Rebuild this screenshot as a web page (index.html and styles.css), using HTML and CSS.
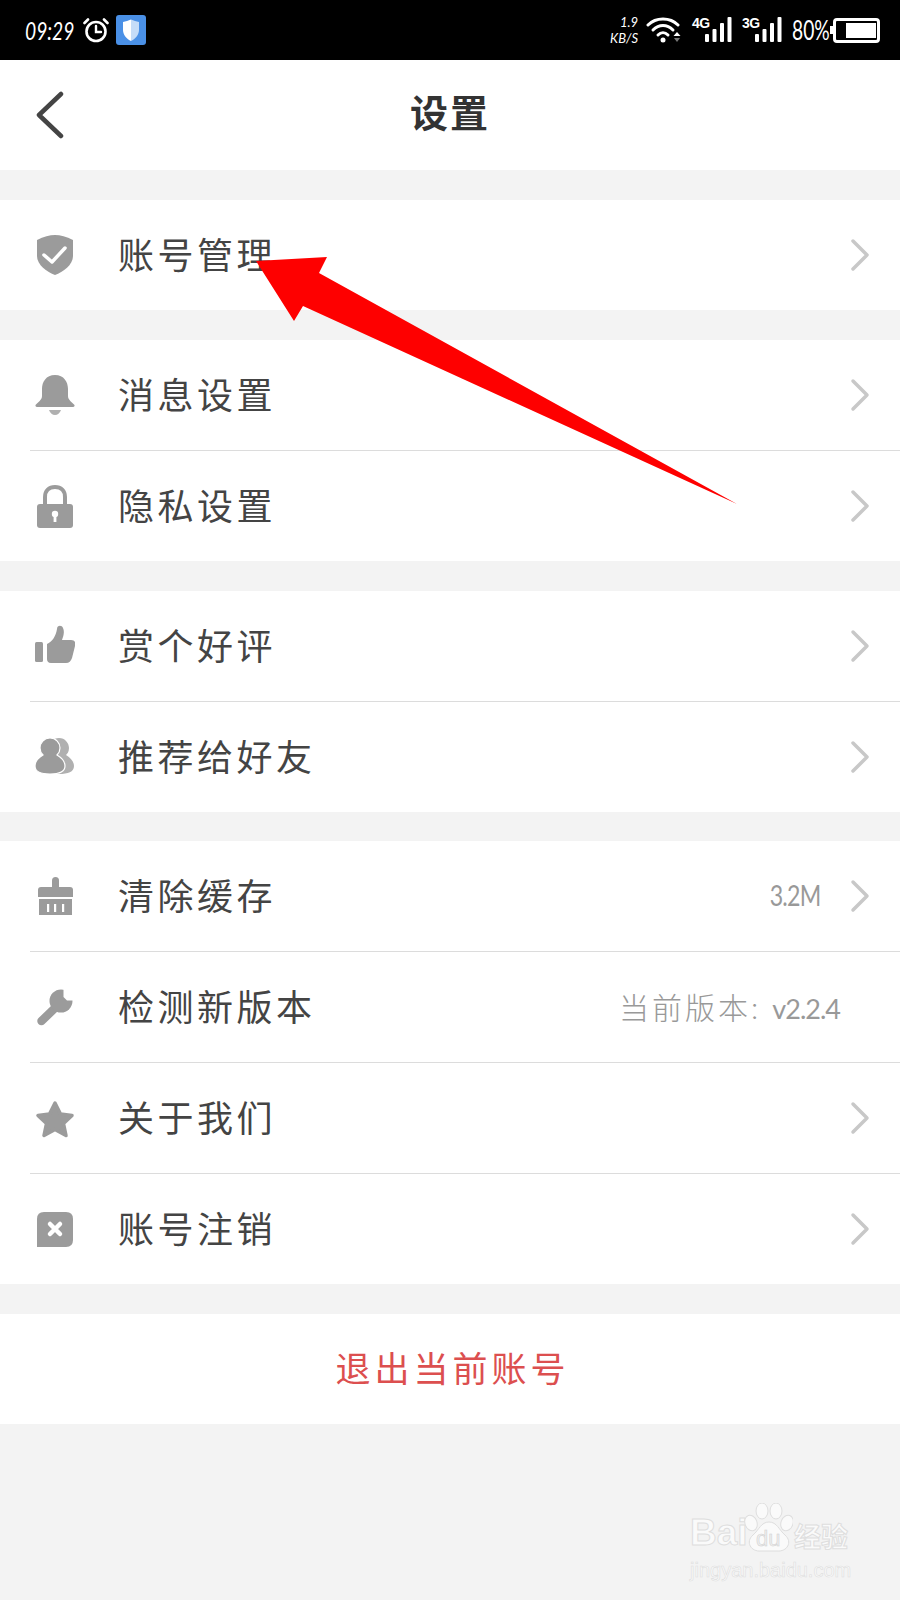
FILE: index.html
```html
<!DOCTYPE html>
<html lang="zh">
<head>
  <meta charset="UTF-8"/>
  <title>设置</title>
  <link rel="stylesheet" href="styles.css">
</head>
<body>
  <div class="page">
    <div class="status-bar">
      <div class="status-left">
        <div class="time-box"><span class="time">09:29</span></div>
        <svg class="alarm" viewBox="0 0 26 26" fill="none" stroke="#fff" stroke-width="2.6" stroke-linecap="round">
          <circle cx="13" cy="14.5" r="9.5"/>
          <polyline points="13,9 13,15 18,15" stroke-width="2.4"/>
          <line x1="1.5" y1="6" x2="5" y2="2.5"/>
          <line x1="24.5" y1="6" x2="21" y2="2.5"/>
        </svg>
        <div class="shield-badge">
          <svg viewBox="0 0 30 30">
            <defs>
              <linearGradient id="shieldFill" x1="0" y1="0" x2="1" y2="0">
                <stop offset="0.5" stop-color="#fff"/>
                <stop offset="0.5" stop-color="#c5dcf8"/>
              </linearGradient>
            </defs>
            <path d="M7 7 Q11 6 15 4.5 Q19 6 23 7 V15 C23 20 19 24 15 26 C11 24 7 20 7 15Z" fill="url(#shieldFill)"/>
          </svg>
        </div>
      </div>
      <div class="status-right">
        <div class="net-speed">
          <span>1.9</span>
          <span>KB/S</span>
        </div>
        <svg class="wifi" viewBox="0 0 36 26" fill="none" stroke="#fff" stroke-width="3" stroke-linecap="round">
          <path d="M2 8 C10 0 24 0 32 8"/>
          <path d="M7 13 C13 7 21 7 27 13"/>
          <path d="M12 18 C15 15 19 15 22 18"/>
          <circle cx="17" cy="23" r="2.5" fill="#fff" stroke="none"/>
          <polygon points="31,15 34.5,19 27.5,19" fill="#fff" stroke="none"/>
          <polygon points="28,21 34,21 31,25" fill="#777" stroke="none"/>
        </svg>
        <div class="signal">
          <span class="signal-label">4G</span>
          <svg class="signal-bars" viewBox="0 0 27 26" fill="#fff">
            <rect x="0" y="17" width="4" height="8" rx="1"/>
            <rect x="7.5" y="12" width="4" height="13" rx="1"/>
            <rect x="15" y="6" width="4" height="19" rx="1"/>
            <rect x="22.5" y="0" width="4" height="25" rx="1"/>
          </svg>
        </div>
        <div class="signal">
          <span class="signal-label">3G</span>
          <svg class="signal-bars" viewBox="0 0 27 26" fill="#fff">
            <rect x="0" y="17" width="4" height="8" rx="1"/>
            <rect x="7.5" y="12" width="4" height="13" rx="1"/>
            <rect x="15" y="6" width="4" height="19" rx="1"/>
            <rect x="22.5" y="0" width="4" height="25" rx="1"/>
          </svg>
        </div>
        <div class="battery-box"><span class="battery-text">80%</span></div>
        <div class="battery-nub"></div>
        <div class="battery"><div class="battery-fill"></div></div>
      </div>
    </div>

    <div class="header">
      <svg class="back" viewBox="0 0 30 48" fill="none" stroke="#444" stroke-width="4.5" stroke-linecap="round" stroke-linejoin="round">
        <polyline points="26,3 4,24 26,45"/>
      </svg>
      <h1 class="title">设置</h1>
    </div>

    <div class="group">
      <div class="row">
        <svg class="icon" viewBox="0 0 40 44">
          <path d="M2 7 Q12 2 20 2 Q28 2 38 7 V23 C38 32 28 39 20 42 C12 39 2 32 2 23Z" fill="#9b9b9b"/>
          <polyline points="9,22 17,29 30,15" fill="none" stroke="#fff" stroke-width="3.5" stroke-linecap="round" stroke-linejoin="round"/>
        </svg>
        <span class="label">账号管理</span>
        <svg class="chevron" viewBox="0 0 20 34"><polyline points="3,3 17,17 3,31"/></svg>
      </div>
    </div>

    <div class="group">
      <div class="row">
        <svg class="icon" viewBox="0 0 40 44" fill="#9b9b9b">
          <path d="M20 2 C11 2 7 9 7 16 V23 C7 27 3 29 0.5 32 Q0 34 3 34 H37 Q40 34 39.5 32 C37 29 33 27 33 23 V16 C33 9 29 2 20 2Z"/>
          <path d="M14 37 H26 Q24 42 20 42 Q16 42 14 37Z" fill="#b0b0b0"/>
        </svg>
        <span class="label">消息设置</span>
        <svg class="chevron" viewBox="0 0 20 34"><polyline points="3,3 17,17 3,31"/></svg>
      </div>
      <div class="sep"></div>
      <div class="row">
        <svg class="icon" viewBox="0 0 40 44" fill="#9b9b9b">
          <path d="M10 22 V13 C10 7 14 3 20 3 C26 3 30 7 30 13 V22" fill="none" stroke="#9b9b9b" stroke-width="4"/>
          <rect x="2" y="20" width="36" height="24" rx="3"/>
          <circle cx="20" cy="30" r="3.2" fill="#fff"/>
          <rect x="18.6" y="31" width="2.8" height="7" fill="#fff"/>
        </svg>
        <span class="label">隐私设置</span>
        <svg class="chevron" viewBox="0 0 20 34"><polyline points="3,3 17,17 3,31"/></svg>
      </div>
    </div>

    <div class="group">
      <div class="row">
        <svg class="icon" viewBox="0 0 40 44" fill="#9b9b9b">
          <rect x="0" y="18" width="8" height="20" rx="1.5"/>
          <path d="M12 20 C17 18 21 12 22 5 C22 1 27 1 28 4 C30 8 28 13 27 16 H36 C40 16 41 19 40 22 L37 34 C36 37 34 39 31 39 H16 C13 39 12 37 12 35Z"/>
        </svg>
        <span class="label">赏个好评</span>
        <svg class="chevron" viewBox="0 0 20 34"><polyline points="3,3 17,17 3,31"/></svg>
      </div>
      <div class="sep"></div>
      <div class="row">
        <svg class="icon" viewBox="0 0 40 44">
          <path d="M24 3 C30 3 34 8 34 13 C34 17 32 19 31 20 C36 23 39 27 39 31 C39 37 33 39 24 39 C15 39 9 37 9 31 C9 27 12 23 17 20 C16 19 14 17 14 13 C14 8 18 3 24 3Z" fill="#b0b0b0"/>
          <path d="M15 3 C21 3 25 8 25 13 C25 17 23 19 22 20 C27 23 30 27 30 31 C30 37 24 39 15 39 C6 39 0 37 0 31 C0 27 3 23 8 20 C7 19 5 17 5 13 C5 8 9 3 15 3Z" fill="#9b9b9b" stroke="#fff" stroke-width="1.2"/>
        </svg>
        <span class="label">推荐给好友</span>
        <svg class="chevron" viewBox="0 0 20 34"><polyline points="3,3 17,17 3,31"/></svg>
      </div>
    </div>

    <div class="group group-long">
      <div class="row">
        <svg class="icon" viewBox="0 0 40 44" fill="#9b9b9b">
          <rect x="17" y="3" width="7" height="14" rx="3.5"/>
          <path d="M3 16 Q3 13 6 13 H35 Q38 13 38 16 V23 H3Z"/>
          <rect x="4" y="25" width="33" height="16"/>
          <rect x="12" y="30" width="2.2" height="8" fill="#fff"/>
          <rect x="19" y="30" width="2.2" height="8" fill="#fff"/>
          <rect x="27" y="30" width="2.2" height="8" fill="#fff"/>
        </svg>
        <span class="label">清除缓存</span>
        <span class="value value-narrow">3.2M</span>
        <svg class="chevron" viewBox="0 0 20 34"><polyline points="3,3 17,17 3,31"/></svg>
      </div>
      <div class="sep"></div>
      <div class="row">
        <svg class="icon" viewBox="0 0 40 44">
          <line x1="6.5" y1="36" x2="20" y2="23" stroke="#9b9b9b" stroke-width="8.5" stroke-linecap="round"/>
          <circle cx="26" cy="16" r="11.5" fill="#9b9b9b"/>
          <path d="M28.5 3 V12 L32 15.5 H41 V3Z" fill="#fff"/>
        </svg>
        <span class="label">检测新版本</span>
        <span class="value value-only">当前版本: <span class="version">v2.2.4</span></span>
      </div>
      <div class="sep"></div>
      <div class="row">
        <svg class="icon" viewBox="0 0 40 44">
          <polygon points="20,7 25.5,18 37,19.5 28.5,27.5 31,39.5 20,33.5 9,39.5 11.5,27.5 3,19.5 14.5,18" fill="#9b9b9b" stroke="#9b9b9b" stroke-width="3.5" stroke-linejoin="round"/>
        </svg>
        <span class="label">关于我们</span>
        <svg class="chevron" viewBox="0 0 20 34"><polyline points="3,3 17,17 3,31"/></svg>
      </div>
      <div class="sep"></div>
      <div class="row">
        <svg class="icon" viewBox="0 0 40 44">
          <path d="M9 5 H31 Q38 5 38 12 V33 Q38 40 31 40 H2 V12 Q2 5 9 5Z" fill="#9b9b9b"/>
          <path d="M15 17 L25 27 M25 17 L15 27" stroke="#fff" stroke-width="4.5" stroke-linecap="round"/>
        </svg>
        <span class="label">账号注销</span>
        <svg class="chevron" viewBox="0 0 20 34"><polyline points="3,3 17,17 3,31"/></svg>
      </div>
    </div>

    <div class="group">
      <div class="row row-center">
        <span class="logout">退出当前账号</span>
      </div>
    </div>

    <!-- annotation arrow drawn over the screenshot -->
    <svg class="arrow" viewBox="250 250 490 260">
      <polygon points="256,261 327,257 319,273 737,504 303,306 294,321" fill="#fe0000"/>
    </svg>

    <div class="watermark">
      <div class="wm-logo">
        <span class="wm-bai">Bai</span>
        <div class="wm-paw">
          <svg viewBox="0 0 50 50" fill="#fafafa" stroke="#dedede" stroke-width="1">
            <ellipse cx="8" cy="20" rx="6" ry="8" transform="rotate(-20 8 20)"/>
            <ellipse cx="19" cy="8" rx="6" ry="8"/>
            <ellipse cx="33" cy="8" rx="6" ry="8"/>
            <ellipse cx="44" cy="20" rx="6" ry="8" transform="rotate(20 44 20)"/>
            <path d="M26 19 C34 19 36 27 42 32 C50 39 44 49 34 48 H18 C8 49 2 39 10 32 C16 27 18 19 26 19Z"/>
          </svg>
          <span class="wm-du">du</span>
        </div>
        <span class="wm-jy">经验</span>
      </div>
      <span class="wm-url">jingyan.baidu.com</span>
    </div>
  </div>
</body>
</html>
```

FILE: styles.css
```css
* {
  margin: 0;
  padding: 0;
  box-sizing: border-box;
}
body {
  background: #f3f3f3;
  font-family: "Noto Sans CJK SC", sans-serif;
  color: #444;
}
.page {
  position: relative;
  height: 1600px;
  overflow: hidden;
}

/* status bar */
.status-bar {
  height: 60px;
  background: #000;
  color: #fff;
  display: flex;
  justify-content: space-between;
  align-items: center;
  padding: 0 20px 0 25px;
}
.status-left {
  display: flex;
  align-items: center;
}
.time-box {
  width: 58px;
}
.time {
  display: inline-block;
  font-family: Lato, sans-serif;
  font-style: italic;
  font-size: 26px;
  transform: scaleX(0.74);
  transform-origin: left center;
}
.alarm {
  width: 26px;
  height: 26px;
}
.shield-badge {
  width: 30px;
  height: 30px;
  margin-left: 7px;
  background: #4a90e6;
  border-radius: 3px;
}
.shield-badge svg {
  display: block;
  width: 30px;
  height: 30px;
}
.status-right {
  display: flex;
  align-items: center;
}
.net-speed {
  display: flex;
  flex-direction: column;
  align-items: flex-end;
  font-family: Lato, sans-serif;
  font-size: 13px;
  line-height: 16px;
  font-style: italic;
  width: 40px;
}
.wifi {
  width: 36px;
  height: 26px;
  margin-left: 8px;
}
.signal {
  display: flex;
  margin-left: 10px;
  height: 26px;
}
.signal-label {
  font-family: "Liberation Sans", sans-serif;
  font-weight: 700;
  font-size: 14px;
  line-height: 13px;
  width: 13px;
  letter-spacing: -0.5px;
}
.signal-bars {
  width: 27px;
  height: 26px;
}
.battery-box {
  margin-left: 10px;
  width: 38px;
}
.battery-text {
  display: inline-block;
  font-family: Lato, sans-serif;
  font-size: 26px;
  transform: scaleX(0.74);
  transform-origin: left center;
}
.battery-nub {
  width: 3px;
  height: 8px;
  background: #fff;
}
.battery {
  width: 47px;
  height: 25px;
  border: 3px solid #fff;
  border-radius: 4px;
  padding: 2px 1px;
  display: flex;
  justify-content: flex-end;
}
.battery-fill {
  width: 30px;
  background: #fff;
}

/* title bar */
.header {
  height: 110px;
  background: #fff;
  display: grid;
  grid-template-columns: 1fr auto 1fr;
  align-items: center;
  padding: 0 35px;
}
.back {
  width: 30px;
  height: 48px;
}
.title {
  font-size: 38px;
  font-weight: 700;
  letter-spacing: 2px;
  color: #333;
  line-height: 1;
  padding-bottom: 8px;
}

/* settings list */
.group {
  margin-top: 30px;
  background: #fff;
}
.group-long {
  margin-top: 29px;
}
.row {
  height: 110px;
  display: flex;
  align-items: center;
  padding: 0 30px 0 35px;
}
.row-center {
  justify-content: center;
}
.sep {
  height: 1px;
  margin-left: 30px;
  background: #dcdcdc;
}
.icon {
  width: 40px;
  height: 44px;
  flex-shrink: 0;
}
.label {
  margin-left: 43px;
  padding-bottom: 4px;
  font-size: 36px;
  letter-spacing: 3.5px;
  color: #444;
}
.value {
  margin-left: auto;
  padding-bottom: 3px;
  font-family: Lato, "Noto Sans CJK SC", sans-serif;
  font-weight: 300;
  font-size: 29px;
  letter-spacing: -1px;
  color: #999;
}
.value-narrow {
  font-weight: 400;
  transform: scaleX(0.8);
  transform-origin: right center;
}
.value-only {
  margin-right: 30px;
  font-size: 30px;
  letter-spacing: 3px;
}
.version {
  font-size: 27px;
  font-weight: 400;
  letter-spacing: -1px;
}
.chevron {
  width: 20px;
  height: 34px;
  margin-left: 30px;
  fill: none;
  stroke: #c8c8c8;
  stroke-width: 3.5;
  stroke-linecap: round;
  stroke-linejoin: round;
}
.label + .chevron {
  margin-left: auto;
}
.logout {
  padding-bottom: 6px;
  font-size: 35px;
  letter-spacing: 4px;
  color: #dc4f4f;
}

/* overlays */
.arrow {
  position: absolute;
  left: 250px;
  top: 250px;
  width: 490px;
  height: 260px;
}
.watermark {
  position: absolute;
  left: 690px;
  top: 1503px;
  display: flex;
  flex-direction: column;
}
.wm-logo {
  display: flex;
  align-items: flex-end;
  height: 50px;
}
.wm-bai,
.wm-du,
.wm-jy,
.wm-url {
  color: #fafafa;
  -webkit-text-stroke: 1px #dedede;
}
.wm-bai {
  font-family: "Liberation Sans", sans-serif;
  font-weight: 700;
  font-size: 37px;
  line-height: 40px;
  width: 53px;
}
.wm-paw {
  position: relative;
  width: 50px;
  height: 50px;
}
.wm-paw svg {
  width: 50px;
  height: 50px;
}
.wm-du {
  position: absolute;
  left: 13px;
  top: 24px;
  font-family: "Liberation Sans", sans-serif;
  font-size: 22px;
  line-height: 24px;
  color: #eee;
  -webkit-text-stroke: 0.5px #cfcfcf;
}
.wm-jy {
  font-size: 27px;
  line-height: 34px;
  font-weight: 700;
  margin-left: 1px;
}
.wm-url {
  font-family: "Liberation Sans", sans-serif;
  font-size: 20px;
  line-height: 24px;
  margin-top: 5px;
  -webkit-text-stroke-width: 0.6px;
}
```
